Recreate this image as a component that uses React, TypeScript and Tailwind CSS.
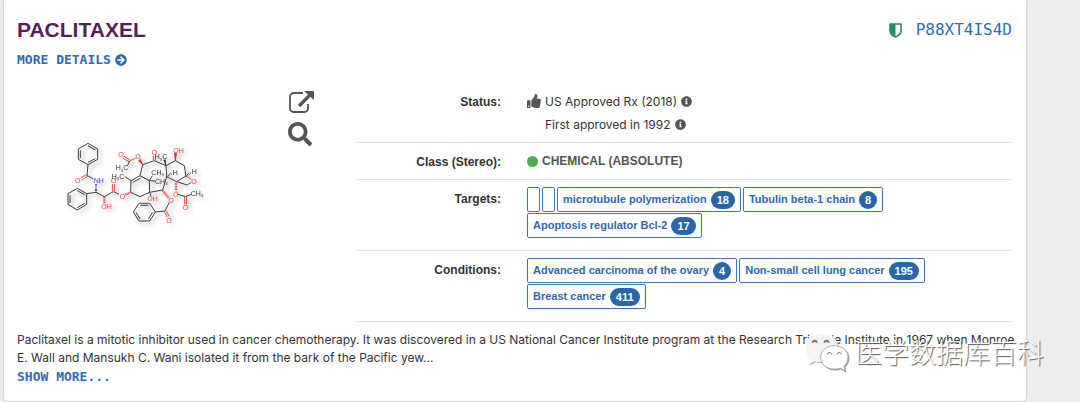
import type { ReactNode } from "react";
import { FaArrowCircleRight, FaInfoCircle, FaSearch, FaThumbsUp } from "react-icons/fa";

type Tag = {
  label: string;
  count?: number;
};

const targets: Tag[] = [
  { label: "" },
  { label: "" },
  { label: "microtubule polymerization", count: 18 },
  { label: "Tubulin beta-1 chain", count: 8 },
  { label: "Apoptosis regulator Bcl-2", count: 17 },
];

const conditions: Tag[] = [
  { label: "Advanced carcinoma of the ovary", count: 4 },
  { label: "Non-small cell lung cancer", count: 195 },
  { label: "Breast cancer", count: 411 },
];

const carbonBonds = [
  // phenyl rings
  "M114 40 143 57V88L114 104 85 88V57ZM114 47 136 60M136 86 114 97M91 84V61",
  "M82 175 110 191V223L82 240 54 223V191ZM82 182 104 194M104 220 82 233M60 219V195",
  "M267 220H299L316 246 299 273H267L250 246ZM271 226H295M308 247 295 267M270 267 258 247",
  // side chain
  "M114 104 111 136 130 147M138 187 110 191M138 187 163 200 190 185 207 193",
  // taxane core
  "M242 187 243 152 270 137 298 152 299 187 270 200ZM248 157 272 144",
  "M270 137 278 104 313 92 348 107 376 92 403 107 408 138M380 155 350 140 348 107M350 140 338 180 299 187",
  "M243 152 225 140M298 152 307 137M298 152 315 153M348 107 344 91M299 187 303 198",
  "M380 155 412 165 422 158M240 92 232 107M380 155 408 138",
  // acetate and benzoate
  "M383 193 407 200 424 193M358 217 345 243 316 246",
];

const oxygenBonds = [
  "M111 133 93 143M113 139 96 149M187 184V162M193 184V162M239 89 222 79M237 95 219 85",
  "M310 91V78M316 91V78M404 200V223M410 200V223M343 244 351 261M349 242 357 259M240 92 256 85M408 138 424 148",
];

const atoms = [
  { x: 75, y: 160, text: "O", color: "fill-[#e8453a]" },
  { x: 182, y: 160, text: "O", color: "fill-[#e8453a]" },
  { x: 209, y: 206, text: "O", color: "fill-[#e8453a]" },
  { x: 154, y: 237, text: "OH", color: "fill-[#e8453a]" },
  { x: 205, y: 82, text: "O", color: "fill-[#e8453a]" },
  { x: 256, y: 88, text: "O", color: "fill-[#e8453a]" },
  { x: 305, y: 76, text: "O", color: "fill-[#e8453a]" },
  { x: 370, y: 69, text: "OH", color: "fill-[#e8453a]" },
  { x: 424, y: 161, text: "O", color: "fill-[#e8453a]" },
  { x: 369, y: 200, text: "O", color: "fill-[#e8453a]" },
  { x: 398, y: 241, text: "O", color: "fill-[#e8453a]" },
  { x: 292, y: 214, text: "OH", color: "fill-[#e8453a]" },
  { x: 355, y: 219, text: "O", color: "fill-[#e8453a]" },
  { x: 349, y: 279, text: "O", color: "fill-[#e8453a]" },
  { x: 131, y: 160, text: "NH", color: "fill-[#4a3df0]" },
  { x: 368, y: 134, text: "H", color: "fill-[#333333]" },
  { x: 425, y: 132, text: "H", color: "fill-[#333333]" },
];

const methyls = [
  { x: 197, y: 121, text: ["H", "C"] },
  { x: 185, y: 146, text: ["H", "C"] },
  { x: 314, y: 88, text: ["H", "C"] },
  { x: 304, y: 135, text: ["CH", ""] },
  { x: 315, y: 161, text: ["CH", ""] },
  { x: 422, y: 197, text: ["CH", ""] },
];

function Molecule() {
  return (
    <svg
      viewBox="0 0 510 330"
      className="w-[170px] h-[110px] drop-shadow-[3px_3px_2px_rgba(0,0,0,0.3)]"
      role="img"
      aria-label="Structure of paclitaxel"
      fontFamily="'Liberation Sans', Arial, sans-serif"
      fontSize="21"
    >
      <g fill="none" strokeWidth="3">
        {carbonBonds.map((d) => (
          <path key={d} d={d} stroke="#3c3c3c" />
        ))}
        {oxygenBonds.map((d) => (
          <path key={d} d={d} stroke="#e8453a" />
        ))}
        {/* stereo bonds */}
        <path d="M138 187V172" stroke="#333333" strokeWidth="7" strokeDasharray="2 2" />
        <path d="M138 172V160" stroke="#4a3df0" strokeWidth="6" strokeDasharray="2 2" />
        <path
          d="M163 201V220M242 187 224 195M378 158V184M338 182 356 203"
          stroke="#e8453a"
          strokeWidth="7"
          strokeDasharray="3 2"
        />
        <path d="M350 140 366 128M408 138 424 127" stroke="#333333" strokeWidth="6" strokeDasharray="2 3" />
      </g>
      <path d="M278 104 266 92 271 88ZM376 92 373 70H380Z" fill="#e8453a" stroke="#a32920" strokeWidth="2" />
      <path d="M348 107 340 90 347 88Z" fill="#333333" />
      {atoms.map((atom) => (
        <text key={`${atom.x}-${atom.y}`} x={atom.x} y={atom.y} className={atom.color}>
          {atom.text}
        </text>
      ))}
      {methyls.map((m) => (
        <text key={`${m.x}-${m.y}`} x={m.x} y={m.y} fill="#333333">
          {m.text[0]}
          <tspan fontSize="13" dy="4">3</tspan>
          <tspan dy="-4">{m.text[1]}</tspan>
        </text>
      ))}
    </svg>
  );
}

function OpenIcon() {
  return (
    <svg viewBox="0 0 27 24" className="h-6 w-[27px]" fill="none" stroke="currentColor" aria-hidden="true">
      <path d="M15 3H5.500A3.500 3.500 0 0 0 2 6.500V18.500A3.500 3.500 0 0 0 5.500 22H16.500A3.500 3.500 0 0 0 20 18.500V14" strokeWidth="1.800" />
      <path d="M11 16 22 5" strokeWidth="3.200" />
      <path d="M16 1H26V10Z" fill="currentColor" stroke="none" />
    </svg>
  );
}

function ShieldIcon() {
  return (
    <svg viewBox="0 0 13 15" className="h-[15px] w-[13px] text-[#1f9070]" aria-hidden="true">
      <path
        d="M1 1H12V7.500C12 10.500 9 13 6.500 14 4 13 1 10.500 1 7.500Z"
        fill="none"
        stroke="currentColor"
        strokeWidth="1.600"
        strokeLinejoin="round"
      />
      <path d="M1 1H6.500V14C4 13 1 10.500 1 7.500Z" fill="currentColor" />
    </svg>
  );
}

function TagList({ tags }: { tags: Tag[] }) {
  return (
    <div className="flex flex-wrap gap-x-0.5 gap-y-px">
      {tags.map((tag, index) => (
        <a
          key={index}
          href="#"
          aria-label={tag.label || "Unnamed target"}
          className="flex h-[25px] items-center gap-1 rounded-xs border border-[#3f77b8] px-[5px] text-[11px] font-bold text-[#2d69b0]"
        >
          {tag.label}
          {tag.count ? (
            <span className="rounded-full bg-[#2a65aa] px-1.5 leading-[18px] text-white">{tag.count}</span>
          ) : (
            <span className="w-px" />
          )}
        </a>
      ))}
    </div>
  );
}

function Row({ label, children }: { label: string; children: ReactNode }) {
  return (
    <div className="grid grid-cols-[144px_1fr] gap-[26px] border-b border-[#e4e4e4] pt-[7px]">
      <dt className="text-right font-bold leading-6">{label}</dt>
      <dd>{children}</dd>
    </div>
  );
}

function Watermark() {
  return (
    <div className="pointer-events-none absolute right-9 bottom-[31px] flex items-center gap-1.5">
      <svg
        viewBox="0 0 46 42"
        className="h-[41px] w-[45px] drop-shadow-[1px_1px_0px_rgba(90,90,90,0.6)]"
        aria-hidden="true"
      >
        <path
          d="M18 2C8 2 1 8 1 17c0 5 2 9 6 12l-2 5 6-3c3 1 5 1 7 1 10 0 17-6 17-15S28 2 18 2Z"
          fill="#ffffff"
          fillOpacity="0.9"
        />
        <path d="M9 12a2 2 0 0 1 4 0M21 12a2 2 0 0 1 4 0" fill="none" stroke="#777777" strokeWidth="2" />
        <path
          d="M31 15c-8 0-14 5-14 12s6 12 14 12c2 0 4 0 6-1l5 3-1-5c2-2 4-5 4-9 0-7-6-12-14-12Z"
          fill="#ffffff"
          stroke="#aaaaaa"
          strokeWidth="1"
        />
        <path d="M24 24a2 2 0 0 1 4 0M34 24a2 2 0 0 1 4 0" fill="none" stroke="#777777" />
      </svg>
      <span className="font-['Noto_Sans_CJK_SC',sans-serif] text-[27px] leading-8 font-light whitespace-nowrap text-white [text-shadow:1px_1px_1px_#555555]">
        医学数据库百科
      </span>
    </div>
  );
}

export default function App() {
  return (
    <main className="relative bg-[#ededed] pr-[54px] pb-0.5 pl-1 font-['Liberation_Sans',Arial,sans-serif] text-xs text-[#333333]">
      <article className="rounded-b-sm bg-white pr-3.5 pl-[13px] pt-4 pb-3.5 shadow-[0_0_2px_1px_#d0d0d0]">
        <header className="flex items-start justify-between">
          <div>
            <h1 className="text-[21px] leading-7 font-bold text-[#551f5c]">PACLITAXEL</h1>
            <a
              href="#"
              className="mt-1.5 flex items-center gap-1 font-['DejaVu_Sans_Mono',monospace] text-[13px] leading-5 font-bold text-[#2d6cb3]"
            >
              MORE DETAILS
              <FaArrowCircleRight className="size-3" />
            </a>
          </div>
          <a
            href="#"
            className="flex items-center gap-3.5 font-['DejaVu_Sans_Mono',monospace] text-base leading-7 text-[#2d6cb3]"
          >
            <ShieldIcon />
            P88XT4IS4D
          </a>
        </header>

        <div className="mt-[13px] grid grid-cols-[340px_1fr]">
          <div className="flex items-start pt-[7px] pl-[33px]">
            <div className="pt-10">
              <Molecule />
            </div>
            <div className="ml-[68px] flex flex-col gap-2 text-[#555555]">
              <button type="button" aria-label="Open structure">
                <OpenIcon />
              </button>
              <button type="button" aria-label="Zoom structure">
                <FaSearch className="size-6" />
              </button>
            </div>
          </div>

          <dl>
            <Row label="Status:">
              <div className="pb-1.5 font-[Inter,sans-serif] leading-[23px]">
                <p className="flex items-center gap-1">
                  <FaThumbsUp className="mb-0.5 size-3.5 text-[#555555]" />
                  US Approved Rx (2018)
                  <FaInfoCircle className="size-[11px] text-[#555555]" />
                </p>
                <p className="flex items-center gap-1 pl-[18px]">
                  First approved in 1992
                  <FaInfoCircle className="size-[11px] text-[#555555]" />
                </p>
              </div>
            </Row>
            <Row label="Class (Stereo):">
              <p className="flex items-center gap-1 pb-1.5 leading-[23px] font-bold text-[#555555]">
                <span className="size-[11px] rounded-full bg-[#4cae4c]" />
                CHEMICAL (ABSOLUTE)
              </p>
            </Row>
            <Row label="Targets:">
              <div className="pb-3">
                <TagList tags={targets} />
              </div>
            </Row>
            <Row label="Conditions:">
              <div className="pb-3">
                <TagList tags={conditions} />
              </div>
            </Row>
          </dl>
        </div>

        <p className="-mr-2 mt-[9px] font-[Inter,sans-serif] leading-[18px]">
          Paclitaxel is a mitotic inhibitor used in cancer chemotherapy. It was discovered in a US National Cancer
          Institute program at the Research Triangle Institute in 1967 when Monroe
          E. Wall and Mansukh C. Wani isolated it from the bark of the Pacific yew...
        </p>
        <button
          type="button"
          className="block font-['DejaVu_Sans_Mono',monospace] text-[13px] leading-5 font-bold text-[#2d6cb3]"
        >
          SHOW MORE...
        </button>
      </article>
      <Watermark />
    </main>
  );
}
